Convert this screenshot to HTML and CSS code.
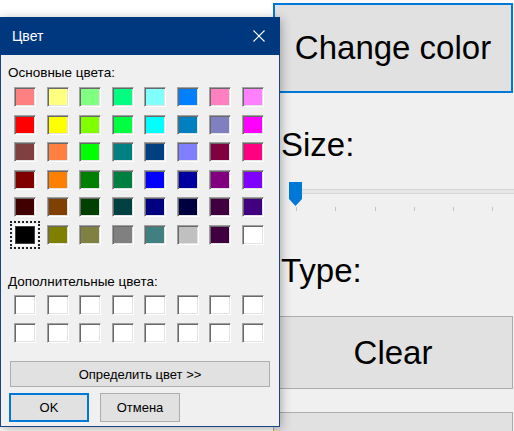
FILE: index.html
```html
<!DOCTYPE html>
<html>
<head>
<meta charset="utf-8">
<link rel="stylesheet" href="styles.css">
</head>
<body>
<div class="app">
  <div class="canvas"></div>
  <div class="panel">
    <div class="btn-wrap"><div class="big focused">Change color</div></div>
    <div class="lbl size">Size:</div>
    <div class="slider">
      <div class="track"></div>
      <div class="ticks"><i></i><i></i><i></i><i></i><i></i><i></i></div>
      <svg class="thumb" width="13" height="24" viewBox="0 0 13 24"><path d="M0 0H13V17L6.5 24L0 17Z" fill="#0078d7"/></svg>
    </div>
    <div class="lbl type">Type:</div>
    <div class="big clear">Clear</div>
    <div class="big next"></div>
  </div>
</div>

<div class="dialog">
  <div class="titlebar">
    <span class="title">Цвет</span>
    <svg class="close" width="12" height="12" viewBox="0 0 12 12"><path d="M0.5 0.5L11.5 11.5M11.5 0.5L0.5 11.5" stroke="#fff" stroke-width="1.1"/></svg>
  </div>
  <div class="dlabel first">Основные цвета:</div>
  <div class="grid">
    <span class="sw" style="background:#ff8080"></span><span class="sw" style="background:#ffff80"></span><span class="sw" style="background:#80ff80"></span><span class="sw" style="background:#00ff80"></span><span class="sw" style="background:#80ffff"></span><span class="sw" style="background:#0080ff"></span><span class="sw" style="background:#ff80c0"></span><span class="sw" style="background:#ff80ff"></span>
    <span class="sw" style="background:#ff0000"></span><span class="sw" style="background:#ffff00"></span><span class="sw" style="background:#80ff00"></span><span class="sw" style="background:#00ff40"></span><span class="sw" style="background:#00ffff"></span><span class="sw" style="background:#0080c0"></span><span class="sw" style="background:#8080c0"></span><span class="sw" style="background:#ff00ff"></span>
    <span class="sw" style="background:#804040"></span><span class="sw" style="background:#ff8040"></span><span class="sw" style="background:#00ff00"></span><span class="sw" style="background:#008080"></span><span class="sw" style="background:#004080"></span><span class="sw" style="background:#8080ff"></span><span class="sw" style="background:#800040"></span><span class="sw" style="background:#ff0080"></span>
    <span class="sw" style="background:#800000"></span><span class="sw" style="background:#ff8000"></span><span class="sw" style="background:#008000"></span><span class="sw" style="background:#008040"></span><span class="sw" style="background:#0000ff"></span><span class="sw" style="background:#0000a0"></span><span class="sw" style="background:#800080"></span><span class="sw" style="background:#8000ff"></span>
    <span class="sw" style="background:#400000"></span><span class="sw" style="background:#804000"></span><span class="sw" style="background:#004000"></span><span class="sw" style="background:#004040"></span><span class="sw" style="background:#000080"></span><span class="sw" style="background:#000040"></span><span class="sw" style="background:#400040"></span><span class="sw" style="background:#400080"></span>
    <span class="sw sel" style="background:#000000"></span><span class="sw" style="background:#808000"></span><span class="sw" style="background:#808040"></span><span class="sw" style="background:#808080"></span><span class="sw" style="background:#408080"></span><span class="sw" style="background:#c0c0c0"></span><span class="sw" style="background:#400040"></span><span class="sw" style="background:#ffffff"></span>
  </div>
  <div class="dlabel second">Дополнительные цвета:</div>
  <div class="grid custom">
    <span class="sw"></span><span class="sw"></span><span class="sw"></span><span class="sw"></span><span class="sw"></span><span class="sw"></span><span class="sw"></span><span class="sw"></span>
    <span class="sw"></span><span class="sw"></span><span class="sw"></span><span class="sw"></span><span class="sw"></span><span class="sw"></span><span class="sw"></span><span class="sw"></span>
  </div>
  <div class="wbtn define">Определить цвет &gt;&gt;</div>
  <div class="btnrow">
    <div class="wbtn ok">OK</div>
    <div class="wbtn cancel">Отмена</div>
  </div>
</div>
</body>
</html>
```

FILE: styles.css
```css
html, body {
  margin: 0;
  padding: 0;
}
body {
  width: 514px;
  height: 431px;
  overflow: hidden;
  position: relative;
  background: #f0f0f0;
  font-family: "Liberation Sans", Arial, sans-serif;
  color: #000;
}
.app {
  display: flex;
  height: 431px;
}
.canvas {
  width: 273px;
  flex: none;
  background: #ffffff;
}
.panel {
  width: 241px;
  flex: none;
  display: flex;
  flex-direction: column;
  background: #f0f0f0;
  overflow: hidden;
}
.panel > * {
  flex: none;
}
.btn-wrap {
  background: #fafafa;
  padding: 3px 1px 0 0;
}
.big {
  box-sizing: border-box;
  width: 240px;
  background: #e1e1e1;
  border: 1px solid #adadad;
  font-size: 33px;
  display: flex;
  align-items: center;
  justify-content: center;
  color: #000;
}
.big.focused {
  height: 90px;
  border: 2px solid #0078d7;
}
.lbl {
  font-size: 33px;
  line-height: 38px;
  padding-left: 8px;
}
.size {
  margin-top: 33px;
}
.slider {
  position: relative;
  padding-top: 25px;
  height: 22px;
}
.track {
  margin-left: 17px;
  height: 5px;
  box-sizing: border-box;
  background: #e7e7e7;
  border-top: 1px solid #d6d6d6;
  border-bottom: 1px solid #d6d6d6;
}
.ticks {
  display: flex;
  gap: 38.3px;
  margin-top: 13px;
  padding-left: 23px;
}
.ticks i {
  width: 1px;
  height: 4px;
  background: #c4c4c4;
}
.thumb {
  position: absolute;
  left: 16px;
  top: 18px;
}
.type {
  margin-top: 41px;
}
.clear {
  margin-top: 26px;
  height: 73px;
}
.next {
  margin-top: 23px;
  height: 40px;
}

.dialog {
  position: absolute;
  left: 0;
  top: 17px;
  width: 280px;
  height: 410px;
  box-sizing: border-box;
  border: 1px solid #1c4482;
  background: #f0f0f0;
  box-shadow: 1px 2px 10px rgba(0, 0, 0, 0.32);
  font-size: 13px;
}
.titlebar {
  height: 38px;
  margin: -1px -1px 0 -1px;
  background: #003880;
  display: flex;
  align-items: center;
  justify-content: space-between;
  padding: 0 15px 0 12px;
  color: #fff;
}
.title {
  font-size: 14px;
}
.close {
  display: block;
}
.dlabel {
  line-height: 15px;
  padding-left: 7px;
  color: #000;
  font-size: 13.5px;
}
.first {
  margin-top: 10px;
}
.grid {
  display: grid;
  grid-template-columns: repeat(8, 22px);
  grid-auto-rows: 20px;
  column-gap: 10.5px;
  row-gap: 7.5px;
  margin-left: 13px;
  margin-top: 7px;
}
.sw {
  box-sizing: border-box;
  width: 22px;
  height: 20px;
  border: 1px solid;
  border-color: #a0a0a0 #ffffff #ffffff #a0a0a0;
  box-shadow: inset 1px 1px 0 #696969, inset -1px -1px 0 #e3e3e3;
  background: #ffffff;
}
.sw.sel {
  border-color: #ffffff;
  box-shadow: inset 0 0 0 1px #404040, 0 0 0 1px #ffffff;
  outline: 2px dotted #222;
  outline-offset: 2px;
}
.second {
  margin-top: 29.5px;
}
.custom {
  margin-top: 6px;
}
.wbtn {
  box-sizing: border-box;
  background: #e1e1e1;
  border: 1px solid #adadad;
  display: flex;
  align-items: center;
  justify-content: center;
  color: #000;
}
.define {
  margin: 18.5px 0 0 9px;
  width: 260px;
  height: 26px;
}
.btnrow {
  display: flex;
  gap: 11px;
  margin: 6px 0 0 8px;
}
.ok, .cancel {
  width: 80px;
  height: 29px;
}
.ok {
  border: 2px solid #0078d7;
}
```
